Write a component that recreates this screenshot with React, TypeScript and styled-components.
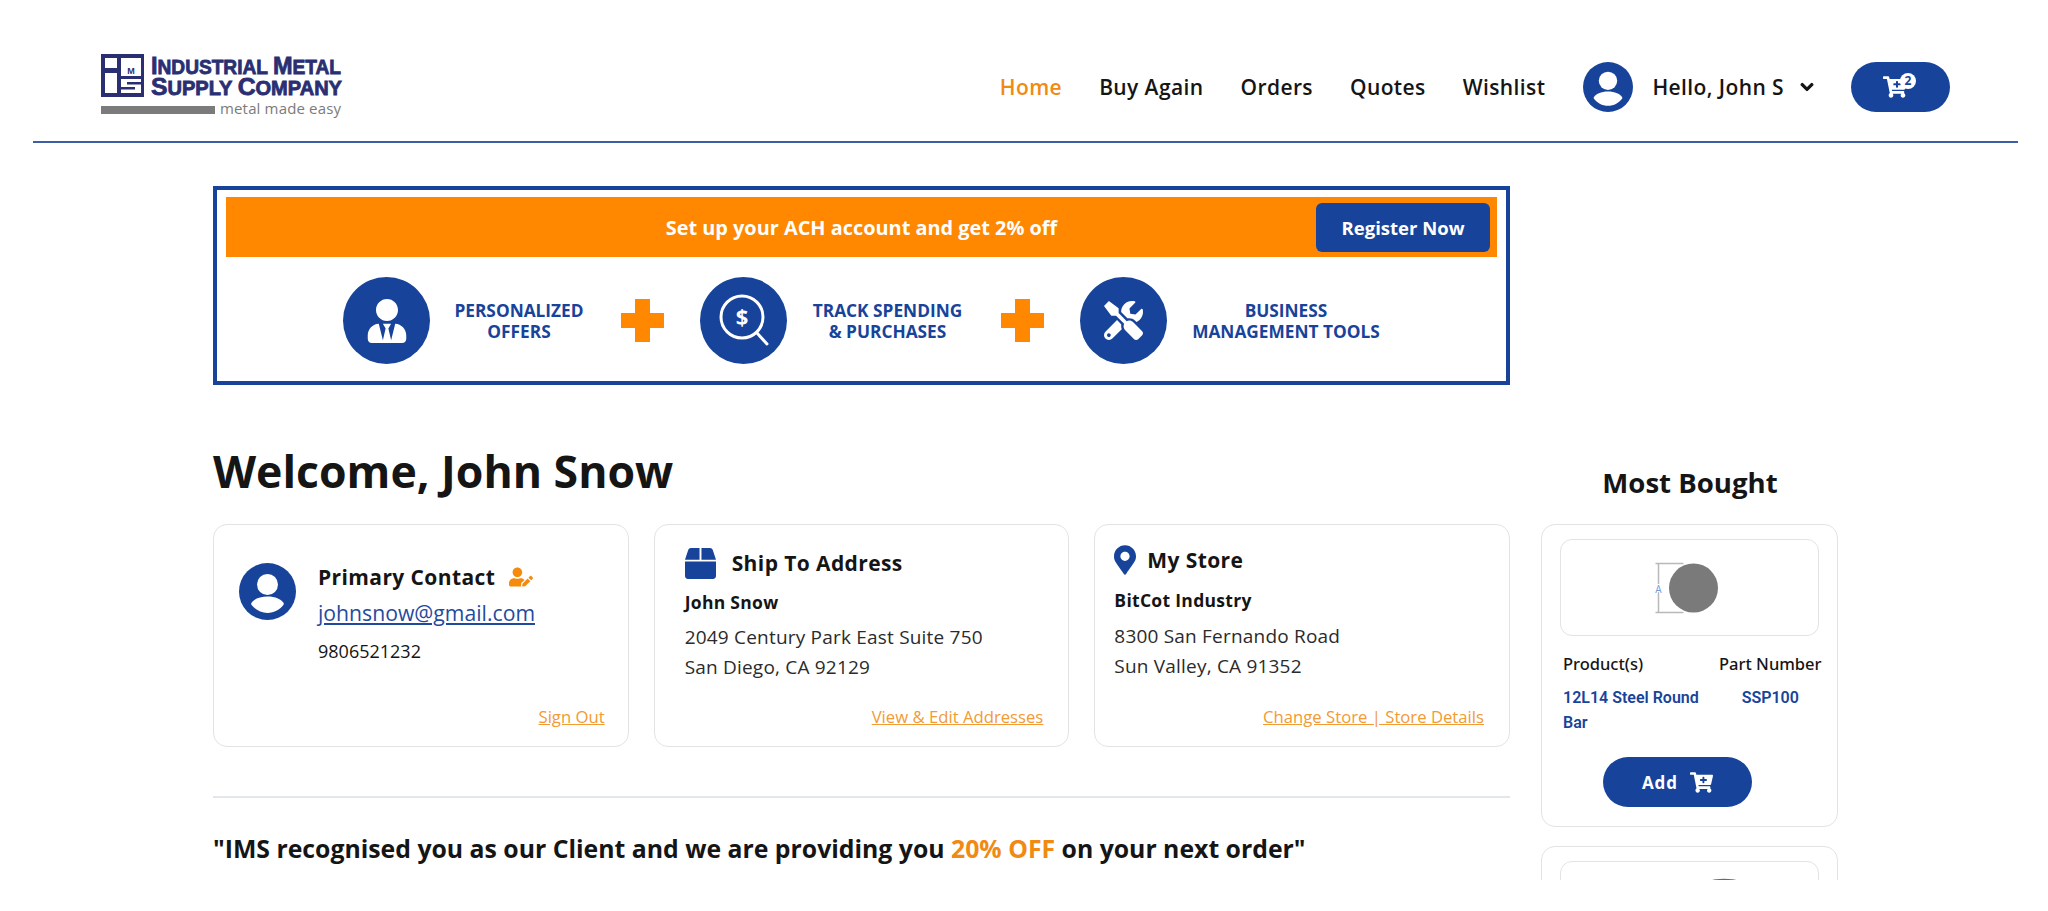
import React from 'react';
import styled, { createGlobalStyle } from 'styled-components';
import { FaBox, FaCartPlus, FaChevronDown, FaMapMarkerAlt, FaTools, FaUserEdit, FaUserTie } from 'react-icons/fa';

const BLUE = '#17449a';
const ORANGE = '#ff8800';
const LINK_ORANGE = '#f29a33';
const NAVY = '#2a2f72';

const GlobalStyle = createGlobalStyle`
    body {
        margin: 0;
        background: #fff;
        font-family: "Open Sans", "Noto Sans", sans-serif;
        color: #151515;
    }
`;

const Page = styled.div`
    height: 880px;
    overflow: hidden;
`;

const Header = styled.header`
    box-sizing: border-box;
    height: 143px;
    margin: 0 30px 0 33px;
    padding: 32px 68px 0;
    display: flex;
    align-items: center;
    justify-content: space-between;
    border-bottom: 2px solid #3d5ea6;
`;

const Nav = styled.nav`
    display: flex;
    align-items: center;
    gap: 37px;
`;

const NavLink = styled.a<{ $active?: boolean }>`
    font-size: 21px;
    font-weight: 600;
    letter-spacing: 0.4px;
    color: ${(p) => (p.$active ? '#f08a12' : '#151515')};
`;

const UserMenu = styled.div`
    display: flex;
    align-items: center;
    gap: 19px;
    margin-left: 1px;
    font-size: 21px;
    font-weight: 600;
    letter-spacing: 0.4px;
`;

const Chevron = styled(FaChevronDown)`
    width: 14px;
    height: 14px;
    margin-left: -3px;
    stroke: currentColor;
    stroke-width: 40px;
`;

const CartPill = styled.div`
    position: relative;
    box-sizing: border-box;
    width: 99px;
    height: 50px;
    padding-right: 12px;
    border-radius: 25px;
    background: ${BLUE};
    display: flex;
    align-items: center;
    justify-content: center;
    color: #fff;
    font-size: 24px;
`;

const CartBadge = styled.span`
    position: absolute;
    left: 49px;
    top: 11px;
    width: 16px;
    height: 16px;
    border-radius: 50%;
    background: #fff;
    color: ${BLUE};
    font-size: 12px;
    font-weight: 700;
    line-height: 16px;
    text-align: center;
`;

const Content = styled.div`
    display: flex;
    gap: 31px;
    padding-left: 213px;
`;

const Main = styled.main`
    width: 1297px;
    flex: none;
`;

const Banner = styled.section`
    box-sizing: border-box;
    height: 199px;
    margin-top: 43px;
    padding: 7px 9px;
    border: 4px solid ${BLUE};
`;

const BannerBar = styled.div`
    height: 60px;
    background: ${ORANGE};
    display: grid;
    grid-template-columns: 1fr auto 1fr;
    align-items: center;
    padding: 0 7px;
    color: #fff;
    font-size: 19.9px;
    font-weight: 700;
`;

const BannerText = styled.span`
    grid-column: 2;
`;

const RegisterButton = styled.button`
    justify-self: end;
    width: 174px;
    height: 49px;
    border: 0;
    border-radius: 6px;
    background: ${BLUE};
    color: #fff;
    font: 700 18.5px "Open Sans", sans-serif;
`;

const Benefits = styled.div`
    display: flex;
    align-items: center;
    height: 87px;
    margin-top: 20px;
    padding-left: 117px;
`;

const BenefitCircle = styled.div<{ $icon?: number }>`
    width: 87px;
    height: 87px;
    flex: none;
    border-radius: 50%;
    background: ${BLUE};
    color: #fff;
    display: flex;
    align-items: center;
    justify-content: center;
    font-size: ${(p) => p.$icon ?? 44}px;
`;

const BenefitLabel = styled.div<{ $width: number }>`
    width: ${(p) => p.$width}px;
    margin-right: 13px;
    flex: none;
    text-align: center;
    color: ${BLUE};
    font-size: 17.3px;
    font-weight: 700;
    line-height: 21px;
`;

const Plus = styled.div`
    width: 43px;
    height: 43px;
    margin-right: 36px;
    flex: none;
    background:
        linear-gradient(${ORANGE}, ${ORANGE}) center / 15px 100% no-repeat,
        linear-gradient(${ORANGE}, ${ORANGE}) center / 100% 15px no-repeat;
`;

const Heading = styled.h1`
    margin: 54px 0 22px;
    font-size: 44.6px;
    line-height: 63px;
    font-weight: 700;
`;

const Cards = styled.div`
    display: grid;
    grid-template-columns: repeat(3, 1fr);
    gap: 25px;
`;

const Card = styled.div<{ $left: number; $right?: number }>`
    box-sizing: border-box;
    height: 223px;
    padding: 16px ${(p) => p.$right ?? 25}px 18px ${(p) => p.$left}px;
    border: 1.5px solid #e3e3e3;
    border-radius: 14px;
    display: flex;
    flex-direction: column;
`;

const CardTop = styled.div<{ $gap: number; $raise?: number }>`
    display: flex;
    align-items: center;
    gap: ${(p) => p.$gap}px;
    height: 44px;
    margin-top: ${(p) => -(p.$raise ?? 0)}px;
`;

const CardTitle = styled.div`
    font-size: 21px;
    font-weight: 700;
    letter-spacing: 0.4px;
`;

const CardName = styled.div<{ $top: number }>`
    margin-top: ${(p) => p.$top}px;
    font-size: 17.5px;
    font-weight: 700;
    letter-spacing: 0.3px;
`;

const Address = styled.div<{ $top: number }>`
    margin-top: ${(p) => p.$top}px;
    font-size: 19px;
    line-height: 30px;
    letter-spacing: 0.2px;
    color: #2b2b2b;
`;

const CardLink = styled.a`
    margin-top: auto;
    align-self: flex-end;
    font-size: 16.7px;
    color: ${LINK_ORANGE};
    text-decoration: underline;
`;

const ContactRow = styled.div`
    display: flex;
    gap: 22px;
    margin-top: 22px;
`;

const ContactTitle = styled(CardTitle)`
    display: flex;
    align-items: center;
    gap: 14px;
`;

const Email = styled.a`
    display: block;
    margin-top: 7px;
    font-size: 21.2px;
    color: #1f4b9e;
    text-decoration: underline;
`;

const Phone = styled.div`
    margin-top: 12px;
    font-size: 18px;
    font-weight: 500;
`;

const Divider = styled.hr`
    margin: 49px 0 0;
    border: 0;
    border-top: 2px solid #e3e6ea;
`;

const Quote = styled.p`
    margin: 32px 0 0;
    font-size: 24.8px;
    line-height: 36px;
    font-weight: 700;
`;

const Highlight = styled.span`
    color: #f08a12;
`;

const Aside = styled.aside`
    width: 297px;
    flex: none;
`;

const AsideTitle = styled.h2`
    margin: 320px 0 23px;
    padding-left: 1px;
    font-size: 27.6px;
    line-height: 38px;
    font-weight: 700;
    text-align: center;
`;

const ProductCard = styled.div`
    box-sizing: border-box;
    height: 303px;
    margin-bottom: 19px;
    padding: 14px 18px 0;
    border: 1.5px solid #e3e3e3;
    border-radius: 14px;
`;

const ProductImage = styled.div`
    height: 95px;
    border: 1.5px solid #e3e3e3;
    border-radius: 12px;
    display: flex;
    align-items: center;
    justify-content: center;
`;

const ProductTable = styled.div`
    display: grid;
    grid-template-columns: 156px 1fr;
    margin-top: 16px;
    padding-left: 3px;
`;

const ColLabel = styled.div`
    font-family: "Noto Sans", sans-serif;
    font-size: 16.5px;
    font-weight: 500;
    line-height: 24px;
    white-space: nowrap;
`;

const ColValue = styled.div<{ $center?: boolean }>`
    margin-top: 9px;
    font-family: Roboto, sans-serif;
    font-size: 16px;
    font-weight: 600;
    line-height: 25px;
    color: ${BLUE};
    text-align: ${(p) => (p.$center ? 'center' : 'left')};
`;

const AddButton = styled.button`
    display: flex;
    align-items: center;
    justify-content: center;
    gap: 12px;
    width: 149px;
    height: 50px;
    margin: 22px 0 0 43px;
    border: 0;
    border-radius: 25px;
    background: ${BLUE};
    color: #fff;
    font: 700 17px "Open Sans", sans-serif;
    letter-spacing: 1px;
`;

const PinIcon = styled(FaMapMarkerAlt)`
    width: 22px;
    height: 30px;
    flex: none;
    color: ${BLUE};
`;

const BarSvg = styled.svg`
    flex: none;
`;

const AvatarSvg = styled.svg`
    flex: none;
`;

const AvatarIcon = ({ size }: { size: number }) => (
    <AvatarSvg width={size} height={size} viewBox="0 0 57 57">
        <circle cx="28.5" cy="28.5" r="28.5" fill={BLUE} />
        <circle cx="28.5" cy="21.5" r="10.5" fill="#fff" />
        <path d="M12 41c2-5 9-7.5 16.5-7.5S43 36 45 41c-3.5 5.5-10 9-16.5 9S15.5 46.5 12 41z" fill="#fff" />
    </AvatarSvg>
);

const SearchDollarIcon = () => (
    <svg width="87" height="87" viewBox="0 0 87 87">
        <circle cx="42" cy="40" r="21" fill="none" stroke="#fff" strokeWidth="3" />
        <line x1="57" y1="56" x2="67" y2="67" stroke="#fff" strokeWidth="3" strokeLinecap="round" />
        <text x="42" y="48" textAnchor="middle" fontSize="22" fontWeight="700" fill="#fff" fontFamily="Open Sans, sans-serif">$</text>
    </svg>
);

// the small caps are sized by hand, font-variant comes out too small
const LogoLine = ({ y, width, words }: { y: number; width: number; words: [string, string][] }) => (
    <text x="50" y={y} textLength={width} lengthAdjust="spacingAndGlyphs" fontWeight="700" stroke={NAVY} strokeWidth="0.8" fill={NAVY} fontFamily="Liberation Sans, sans-serif">
        {words.map(([cap, rest], i) => (
            <React.Fragment key={cap + rest}>
                <tspan fontSize="24">{cap}</tspan>
                <tspan fontSize="19.5">{rest}{i < words.length - 1 ? ' ' : ''}</tspan>
            </React.Fragment>
        ))}
    </text>
);

const Logo = () => (
    <svg width="245" height="66" viewBox="0 0 245 66">
        <rect x="0" y="0" width="43" height="43" fill={NAVY} />
        <rect x="4" y="4" width="12" height="10" fill="#fff" />
        <rect x="4" y="19" width="12" height="20" fill="#fff" />
        <rect x="20" y="4" width="20" height="18" fill="#fff" />
        <rect x="20" y="25" width="20" height="14" fill="#fff" />
        <rect x="26" y="28" width="14" height="2.5" fill={NAVY} />
        <rect x="20" y="33" width="14" height="2.5" fill={NAVY} />
        <text x="30" y="20" textAnchor="middle" fontSize="9" fontWeight="700" fill={NAVY} fontFamily="Liberation Sans, sans-serif">M</text>
        <LogoLine y={20} width={190} words={[['I', 'NDUSTRIAL'], ['M', 'ETAL']]} />
        <LogoLine y={41} width={191} words={[['S', 'UPPLY'], ['C', 'OMPANY']]} />
        <rect x="0" y="52" width="114" height="8" fill="#7b7b7b" />
        <text x="119" y="60" textLength="121" fontSize="15" fill="#7b7b7b" fontFamily="Open Sans, sans-serif">metal made easy</text>
    </svg>
);

const RoundBar = () => (
    <BarSvg width="90" height="60" viewBox="0 0 90 60">
        <path d="M10.5 5.5h28M10.5 54.5h28M13.5 5.500v49" stroke="#b9b9b9" strokeWidth="1.5" fill="none" />
        <text x="13.5" y="35" textAnchor="middle" fontSize="10" fill="#6f9bdc" stroke="#fff" strokeWidth="2" paintOrder="stroke" fontFamily="Open Sans, sans-serif">A</text>
        <circle cx="48.5" cy="30" r="24.5" fill="#7a7a7a" />
    </BarSvg>
);

// only the top of this one shows above the fold
const TiltedBar = () => (
    <BarSvg width="180" height="90" viewBox="0 0 180 90">
        <ellipse cx="128" cy="44" rx="42" ry="30" transform="rotate(8 128 44)" fill="#6a6a6a" />
    </BarSvg>
);

const App: React.FC = () => (
    <Page>
        <GlobalStyle />
        <Header>
            <Logo />
            <Nav>
                <NavLink $active>Home</NavLink>
                <NavLink>Buy Again</NavLink>
                <NavLink>Orders</NavLink>
                <NavLink>Quotes</NavLink>
                <NavLink>Wishlist</NavLink>
                <UserMenu>
                    <AvatarIcon size={50} />
                    Hello, John S
                    <Chevron />
                </UserMenu>
                <CartPill>
                    <FaCartPlus />
                    <CartBadge>2</CartBadge>
                </CartPill>
            </Nav>
        </Header>
        <Content>
            <Main>
                <Banner>
                    <BannerBar>
                        <BannerText>Set up your ACH account and get 2% off</BannerText>
                        <RegisterButton>Register Now</RegisterButton>
                    </BannerBar>
                    <Benefits>
                        <BenefitCircle><FaUserTie /></BenefitCircle>
                        <BenefitLabel $width={178}>PERSONALIZED<br />OFFERS</BenefitLabel>
                        <Plus />
                        <BenefitCircle><SearchDollarIcon /></BenefitCircle>
                        <BenefitLabel $width={201}>TRACK SPENDING<br />&amp; PURCHASES</BenefitLabel>
                        <Plus />
                        <BenefitCircle $icon={39}><FaTools /></BenefitCircle>
                        <BenefitLabel $width={238}>BUSINESS<br />MANAGEMENT TOOLS</BenefitLabel>
                    </Benefits>
                </Banner>
                <Heading>Welcome, John Snow</Heading>
                <Cards>
                    <Card $left={25} $right={23}>
                        <ContactRow>
                            <AvatarIcon size={57} />
                            <div>
                                <ContactTitle>Primary Contact <FaUserEdit color="#f58a0b" size={24} /></ContactTitle>
                                <Email>johnsnow@gmail.com</Email>
                                <Phone>9806521232</Phone>
                            </div>
                        </ContactRow>
                        <CardLink>Sign Out</CardLink>
                    </Card>
                    <Card $left={30}>
                        <CardTop $gap={16}>
                            <FaBox color={BLUE} size={31} />
                            <CardTitle>Ship To Address</CardTitle>
                        </CardTop>
                        <CardName $top={5}>John Snow</CardName>
                        <Address $top={8}>2049 Century Park East Suite 750<br />San Diego, CA 92129</Address>
                        <CardLink>View &amp; Edit Addresses</CardLink>
                    </Card>
                    <Card $left={19}>
                        <CardTop $gap={11} $raise={3}>
                            <PinIcon />
                            <CardTitle>My Store</CardTitle>
                        </CardTop>
                        <CardName $top={6}>BitCot Industry</CardName>
                        <Address $top={9}>8300 San Fernando Road<br />Sun Valley, CA 91352</Address>
                        <CardLink>Change Store | Store Details</CardLink>
                    </Card>
                </Cards>
                <Divider />
                <Quote>"IMS recognised you as our Client and we are providing you <Highlight>20% OFF</Highlight> on your next order"</Quote>
            </Main>
            <Aside>
                <AsideTitle>Most Bought</AsideTitle>
                <ProductCard>
                    <ProductImage><RoundBar /></ProductImage>
                    <ProductTable>
                        <ColLabel>Product(s)</ColLabel>
                        <ColLabel>Part Number</ColLabel>
                        <ColValue>12L14 Steel Round Bar</ColValue>
                        <ColValue $center>SSP100</ColValue>
                    </ProductTable>
                    <AddButton>Add <FaCartPlus size={23} /></AddButton>
                </ProductCard>
                <ProductCard>
                    <ProductImage><TiltedBar /></ProductImage>
                </ProductCard>
            </Aside>
        </Content>
    </Page>
);

export default App;
